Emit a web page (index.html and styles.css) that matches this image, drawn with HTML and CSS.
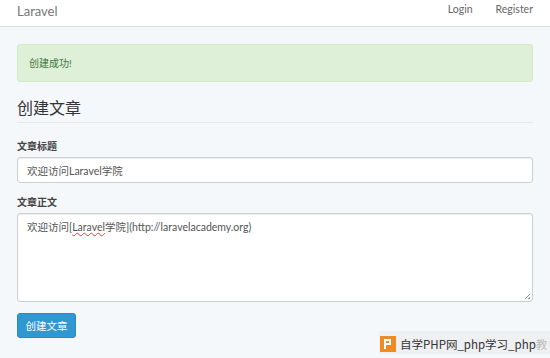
FILE: index.html
```html
<!DOCTYPE html>
<html>
<head>
  <meta charset="UTF-8">
  <title>Laravel</title>
  <link rel="stylesheet" href="styles.css">
</head>
<body>

  <nav class="navbar">
    <a class="brand" href="#">Laravel</a>
    <div class="nav-links">
      <a href="#">Login</a>
      <a href="#">Register</a>
    </div>
  </nav>

  <div class="container">
    <div class="alert">创建成功!</div>

    <h1 class="page-title">创建文章</h1>

    <form class="post-form">
      <div class="form-group">
        <label>文章标题</label>
        <input type="text" class="form-control" value="欢迎访问Laravel学院">
      </div>
      <div class="form-group">
        <label>文章正文</label>
        <div class="form-control textarea">欢迎访问[<span class="typo">Laravel</span>学院](http://laravelacademy.org)<span class="grip"></span></div>
      </div>
      <button type="button" class="btn">创建文章</button>
    </form>
  </div>

  <div class="watermark">
    <span class="logo"><svg width="16" height="16" viewBox="0 0 16 16"><rect width="16" height="16" fill="#f08a24"/><path d="M4 3h7v6H6v4H4z M6 5v2h3V5z" fill="#fff" fill-rule="evenodd"/></svg></span>
    <span class="wm-text">自学PHP网_php学习_php<span class="fade">教</span></span>
  </div>

</body>
</html>
```

FILE: styles.css
```css
body {
  margin: 0;
  background-color: #f5f8fa;
  color: #636b6f;
  font-family: Lato, "Noto Sans CJK SC", sans-serif;
  font-size: 10px;
  height: 358px;
  overflow: hidden;
  position: relative;
}
/* top bar */
.navbar {
  display: flex;
  align-items: center;
  justify-content: space-between;
  height: 26px;
  background-color: #fff;
  border-bottom: 1px solid #d3e0e9;
  padding: 0 17px;
}
.brand {
  color: #777;
  font-size: 13px;
  text-decoration: none;
  margin-top: -4px;
}
.nav-links {
  display: flex;
  gap: 23px;
  margin-top: -8px;
}
.nav-links a {
  color: #666;
  font-size: 10.5px;
  text-decoration: none;
}
/* page */
.container {
  padding: 17px 17px 0;
}
.alert {
  background-color: #dff0d8;
  border: 1px solid #d6e9c6;
  border-radius: 3px;
  color: #3c763d;
  height: 36px;
  line-height: 36px;
  padding: 0 11px;
}
.page-title {
  font-size: 16px;
  font-weight: normal;
  color: #333;
  margin: 15px 0 0;
  padding-bottom: 3px;
  border-bottom: 1px solid #e4e8eb;
  line-height: 22px;
}
.post-form {
  margin-top: 15px;
}
.form-group {
  margin-bottom: 11px;
}
.form-group label {
  display: block;
  font-weight: bold;
  color: #444;
  font-size: 10px;
  margin-bottom: 4px;
}
.form-control {
  display: block;
  box-sizing: border-box;
  width: 100%;
  height: 26px;
  border: 1px solid #ccd0d2;
  border-radius: 3px;
  background-color: #fff;
  color: #555;
  padding: 0 9px;
  font-family: Lato, "Noto Sans CJK SC", sans-serif;
  font-size: 10.5px;
  box-shadow: inset 0 1px 1px rgba(0, 0, 0, 0.075);
}
.textarea {
  height: 89px;
  padding-top: 5px;
  position: relative;
}
.typo {
  text-decoration: underline wavy #e04040;
  text-decoration-thickness: 1px;
}
.grip {
  position: absolute;
  right: 2px;
  bottom: 2px;
  width: 5px;
  height: 5px;
  background: linear-gradient(135deg, transparent 45%, #999 45%, #999 55%, transparent 55%, transparent 75%, #999 75%);
}
.btn {
  display: block;
  margin-top: 0;
  width: 59px;
  height: 25px;
  border: 1px solid #2a88bd;
  border-radius: 3px;
  background-color: #3097d1;
  color: #fff;
  font-family: Lato, "Noto Sans CJK SC", sans-serif;
  font-size: 10.5px;
  padding: 0;
}
/* watermark */
.watermark {
  position: absolute;
  left: 379px;
  top: 331px;
  width: 171px;
  height: 23px;
  display: flex;
  align-items: center;
  gap: 4px;
  padding-left: 1px;
  background-color: #eef0f2;
  box-sizing: border-box;
}
.logo {
  display: flex;
  margin-top: 3px;
}
.wm-text {
  font-family: "Noto Sans CJK SC", sans-serif;
  font-size: 11.5px;
  color: #333;
  white-space: nowrap;
  margin-top: 2px;
}
.fade {
  color: #bbb;
}
```
